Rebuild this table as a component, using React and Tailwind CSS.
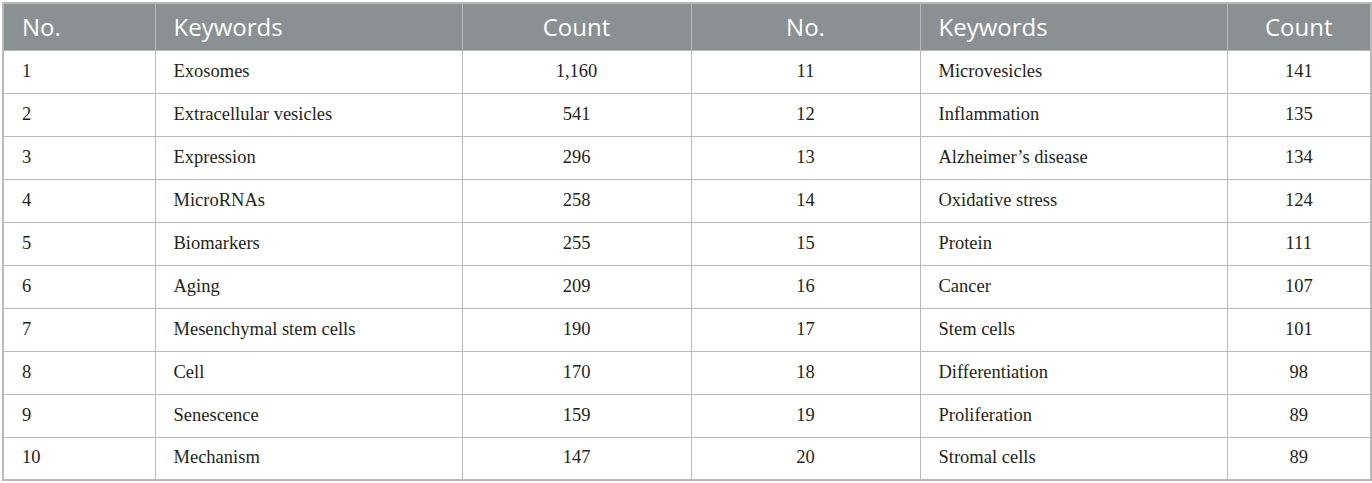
import React from 'react';

const rows = [
    [1, 'Exosomes', '1,160', 11, 'Microvesicles', '141'],
    [2, 'Extracellular vesicles', '541', 12, 'Inflammation', '135'],
    [3, 'Expression', '296', 13, 'Alzheimer’s disease', '134'],
    [4, 'MicroRNAs', '258', 14, 'Oxidative stress', '124'],
    [5, 'Biomarkers', '255', 15, 'Protein', '111'],
    [6, 'Aging', '209', 16, 'Cancer', '107'],
    [7, 'Mesenchymal stem cells', '190', 17, 'Stem cells', '101'],
    [8, 'Cell', '170', 18, 'Differentiation', '98'],
    [9, 'Senescence', '159', 19, 'Proliferation', '89'],
    [10, 'Mechanism', '147', 20, 'Stromal cells', '89'],
];

export default function App() {
    const th = "h-[47px] border border-[#b7b9ba] text-[24px] leading-none font-normal text-white px-[18px]";
    const td = "h-[43px] border border-[#b7b9ba] px-[18px] text-[18.5px] text-[#231f20]";

    return (
        <div className="w-[1372px] h-[483px] bg-white pl-[2px] pt-[2px]">
            <table className="border-collapse border-2 border-[#b7b9ba] w-[1368px] table-fixed">
                <colgroup>
                    <col className="w-[152px]" />
                    <col className="w-[307px]" />
                    <col className="w-[229px]" />
                    <col className="w-[229px]" />
                    <col className="w-[307px]" />
                    <col className="w-[144px]" />
                </colgroup>
                <thead className="bg-[#8b9093] font-['Open_Sans',sans-serif]">
                    <tr>
                        <th className={`${th} text-left`}>No.</th>
                        <th className={`${th} text-left`}>Keywords</th>
                        <th className={`${th} text-center`}>Count</th>
                        <th className={`${th} text-center`}>No.</th>
                        <th className={`${th} text-left`}>Keywords</th>
                        <th className={`${th} text-center`}>Count</th>
                    </tr>
                </thead>
                <tbody className="font-['Liberation_Serif',serif]">
                    {rows.map((r) => (
                        <tr key={r[0]}>
                            <td className={`${td} text-left`}>{r[0]}</td>
                            <td className={`${td} text-left`}>{r[1]}</td>
                            <td className={`${td} text-center`}>{r[2]}</td>
                            <td className={`${td} text-center`}>{r[3]}</td>
                            <td className={`${td} text-left`}>{r[4]}</td>
                            <td className={`${td} text-center`}>{r[5]}</td>
                        </tr>
                    ))}
                </tbody>
            </table>
        </div>
    );
}
